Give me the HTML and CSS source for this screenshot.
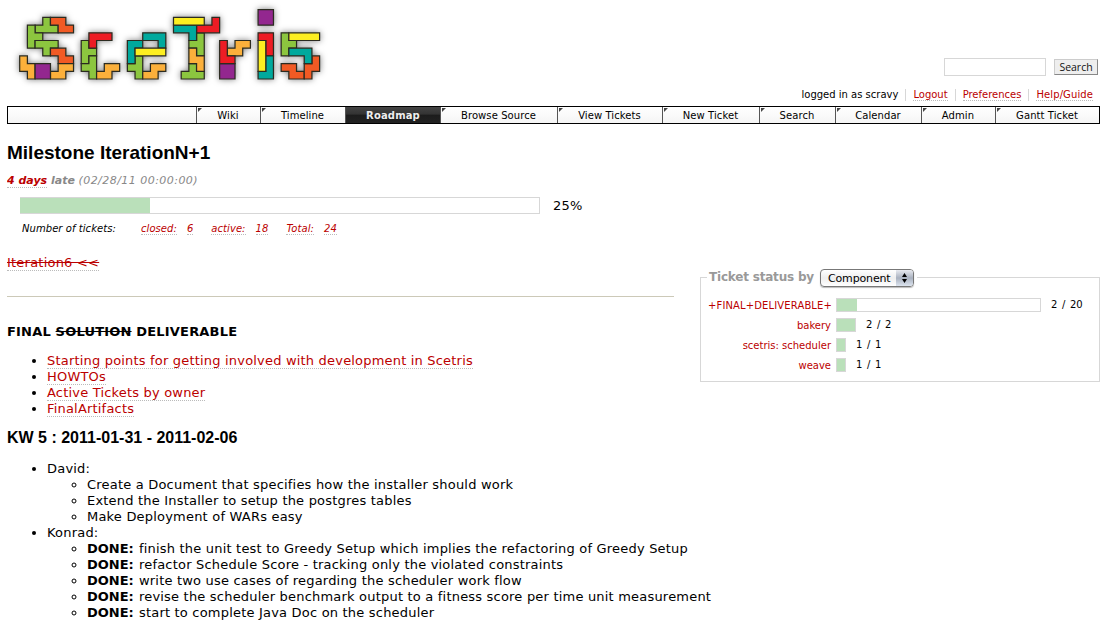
FILE: index.html
```html
<!DOCTYPE html>
<html lang="en">
<head>
<meta charset="utf-8">
<title>Milestone IterationN+1</title>
<link rel="stylesheet" href="styles.css">
</head>
<body>
<header class="header">
  <svg class="logo" width="340" height="100" viewBox="0 0 340 100" role="img" aria-label="ScetTris">
    <g class="blocks" transform="translate(19.7 17.4) scale(7.69 7.7)">
      <g class="green">
        <path d="M3 0h1v1h1v1h-3v-1h1z"/><path d="M1 1h1v1h1v1h-1v1h-1z"/><path d="M2 3h3v1h-1v1h-1v-1h-1z"/>
        <path d="M8 3h1v1h1v1h-1v1h-1z"/><path d="M9 5h1v3h-1v-1h-1v-1h1z"/>
        <path d="M15 5h1v3h-1v-1h-1v-1h1z"/>
        <path d="M23 2h1v3h-1v-1h-1v-1h1z"/><path d="M22 6h1v1h1v1h-3v-1h1z"/>
        <path d="M34 2h1v1h1v1h-1v1h-1z"/>
      </g>
      <g class="rust">
        <path d="M4 0h2v1h1v1h-2v-1h-1z"/><path d="M4 4h2v1h1v1h-2v-1h-1z"/>
        <path d="M34 6h2v1h1v1h-2v-1h-1z"/><path d="M38 5h1v2h-1v1h-1v-2h1z"/>
      </g>
      <g class="amber">
        <path d="M0 5h1v1h1v2h-1v-1h-1z"/><path d="M5 6h2v1h-1v1h-2v-1h1z"/>
        <path d="M11 6h2v1h-1v1h-2v-1h1z"/><path d="M17 6h2v1h-1v1h-2v-1h1z"/>
        <path d="M22 4h1v1h1v2h-1v-1h-1z"/><path d="M28 3h2v1h-1v1h-2v-1h1z"/>
      </g>
      <g class="purple"><path d="M2 6h2v2h-2z"/><path d="M26 6h2v2h-2z"/><path d="M31 -1h2v2h-2z"/></g>
      <g class="red">
        <path d="M9 2h3v1h-2v1h-1z"/><path d="M25 0h1v2h-3v-1h2z"/>
        <path d="M26 3h1v2h1v1h-2z"/><path d="M31 2h2v3h-1v-2h-1z"/>
      </g>
      <g class="teal">
        <path d="M16 2h3v2h-1v-1h-2z"/><path d="M14 3h2v1h-1v2h-1z"/><path d="M20 1h3v2h-1v-1h-2z"/>
        <path d="M32 5h1v3h-2v-1h1z"/><path d="M35 4h3v2h-1v-1h-2z"/>
      </g>
      <g class="yellow"><path d="M15 4h4v1h-4z"/><path d="M20 0h4v1h-4z"/><path d="M31 3h1v4h-1z"/><path d="M35 2h4v1h-4z"/></g>
    </g>
  </svg>
  <div class="tools">
    <form class="search"><input class="field" type="text" aria-label="Search"><button class="button" type="button"><span>Search</span></button></form>
    <ul class="meta">
      <li>logged in as scravy</li><li><a>Logout</a></li><li><a>Preferences</a></li><li><a>Help/Guide</a></li>
    </ul>
  </div>
</header>
<nav class="nav">
  <a class="wiki">Wiki</a><a class="timeline">Timeline</a><a class="roadmap">Roadmap</a><a class="browse">Browse Source</a><a class="view">View Tickets</a><a class="new">New Ticket</a><a class="find">Search</a><a class="calendar">Calendar</a><a class="admin">Admin</a><a class="gantt">Gantt Ticket</a>
</nav>
<main>
  <h1>Milestone IterationN+1</h1>
  <p class="date"><b><a>4 days</a> late</b> <span class="due">(02/28/11 00:00:00)</span></p>
  <div class="overall"><div class="progress"><div class="done" style="width:25%"></div></div><span class="percent">25%</span></div>
  <dl class="counts"><dt class="label">Number of tickets:</dt><dt><a>closed:</a></dt><dd><a>6</a></dd><dt><a>active:</a></dt><dd><a>18</a></dd><dt><a>Total:</a></dt><dd><a>24</a></dd></dl>
  <section class="status">
    <div class="legend"><span class="by">Ticket status by</span><span class="select"><span class="value">Component</span><span class="arrows"><svg width="7" height="12" viewBox="0 0 7 12"><path d="M3.5 1L6 5H1zM3.5 11L6 7H1z"/></svg></span></span></div>
    <div class="row"><a class="name final">+FINAL+DELIVERABLE+</a><div class="bar" style="width:205px"><div class="done" style="width:10%"></div></div><span class="ratio">2 / 20</span></div>
    <div class="row"><a class="name">bakery</a><div class="bar" style="width:20px"><div class="done"></div></div><span class="ratio">2 / 2</span></div>
    <div class="row"><a class="name">scetris: scheduler</a><div class="bar" style="width:10px"><div class="done"></div></div><span class="ratio">1 / 1</span></div>
    <div class="row"><a class="name">weave</a><div class="bar" style="width:10px"><div class="done"></div></div><span class="ratio">1 / 1</span></div>
  </section>
  <p class="previous"><a><s>Iteration6 &lt;&lt;</s></a></p>
  <hr>
  <h2 class="final-title">FINAL <s>SOLUTION</s> DELIVERABLE</h2>
  <ul class="links">
    <li><a>Starting points for getting involved with development in Scetris</a></li>
    <li><a>HOWTOs</a></li>
    <li><a>Active Tickets by owner</a></li>
    <li><a>FinalArtifacts</a></li>
  </ul>
  <h2 class="week">KW 5 : 2011-01-31 - 2011-02-06</h2>
  <ul class="tasks">
    <li>David:
      <ul>
        <li>Create a Document that specifies how the installer should work</li>
        <li>Extend the Installer to setup the postgres tables</li>
        <li>Make Deployment of WARs easy</li>
      </ul>
    </li>
    <li>Konrad:
      <ul>
        <li><b>DONE:</b> finish the unit test to Greedy Setup which implies the refactoring of Greedy Setup</li>
        <li><b>DONE:</b> refactor Schedule Score - tracking only the violated constraints</li>
        <li><b>DONE:</b> write two use cases of regarding the scheduler work flow</li>
        <li><b>DONE:</b> revise the scheduler benchmark output to a fitness score per time unit measurement</li>
        <li><b>DONE:</b> start to complete Java Doc on the scheduler</li>
      </ul>
    </li>
  </ul>
</main>
</body>
</html>
```
FILE: styles.css
```css
* { box-sizing: border-box; }
html { overflow: hidden; }
body { margin: 0 2px 0 7px; background: #fff; color: #000; font: 13px/16px Verdana, "DejaVu Sans", sans-serif; height: 623px; overflow: hidden; }
h1, h2, p, ul, dl, dd { margin: 0; padding: 0; }
a { color: #b00; border-bottom: 1px dotted #bbb; }

.header { display: flex; justify-content: space-between; height: 106px; }
.logo { margin-left: -7px; display: block; filter: drop-shadow(0 0 3px rgba(0,0,0,.5)); }
.blocks { stroke: #2b2b20; stroke-width: .16; }
.green { fill: #8cc63f; } .rust { fill: #f15a24; } .amber { fill: #fbb03b; } .purple { fill: #93278f; }
.red { fill: #ed1c24; } .teal { fill: #00a99d; } .yellow { fill: #fcee21; }

.tools { display: flex; flex-direction: column; align-items: flex-end; padding-top: 58px; }
.search { display: flex; gap: 8px; margin: 0 2px 0 0; height: 18px; }
.field { width: 102px; height: 18px; border: 1px solid #d7d7d7; padding: 0; }
.button { width: 44px; height: 16px; margin-top: 1px; padding: 0; border: 1px solid #ccc; border-right-color: #888; border-bottom-color: #888; background: #eee; color: #111; font: 10.5px/12px "Open Sans", sans-serif; }
.button span { display: block; margin-top: -1px; }
.meta { display: flex; list-style: none; font-size: 10px; line-height: 12px; margin-top: 13px; }
.meta li { padding: 0 7px; border-left: 1px solid #d7d7d7; height: 12px; white-space: nowrap; }
.meta li:last-child { letter-spacing: .1px; }
.meta li:first-child { border-left: 0; }

.nav { display: flex; height: 18px; border: 1px solid #000; padding-left: 188px; background: linear-gradient(#fff, #f5f5f5); font-size: 10px; line-height: 17px; letter-spacing: .08px; }
.nav a { position: relative; color: #000; text-align: center; border: 0; border-left: 1px solid #555; padding-right: 1px; white-space: nowrap; }
.nav a::before { content: ""; position: absolute; left: 1px; top: 1px; border-top: 4px solid #444; border-right: 4px solid transparent; }
.wiki { width: 64px; } .timeline { width: 85px; } .roadmap { width: 95px; } .browse { width: 117px; } .view { width: 105px; }
.new { width: 97px; } .find { width: 76px; } .calendar { width: 86px; } .admin { width: 74px; } .gantt { width: 104px; }
.nav .roadmap { color: #eee; font-weight: bold; letter-spacing: .15px; padding-right: 0; background: linear-gradient(#444 0, #333 45%, #1c1c1c 50%, #222); }
.nav .roadmap::before { display: none; }

h1 { font: bold 19px/22px "Liberation Sans", Arial, sans-serif; margin-top: 18px; }
.date { font-size: 11px; line-height: 14px; margin-top: 10px; font-style: italic; color: #888; }
.due { letter-spacing: .46px; }
.overall { display: flex; align-items: center; margin: 9px 0 0 13px; height: 17px; }
.progress { width: 520px; height: 17px; border: 1px solid #d7d7d7; border-left-width: 0; }
.done { height: 100%; background: #bae0ba; }
.percent { margin-left: 13px; letter-spacing: .2px; }
.counts { display: flex; margin: 8px 0 0 15px; font-size: 10px; line-height: 13px; font-style: italic; height: 13px; white-space: nowrap; letter-spacing: .06px; }
.counts dt { margin-right: 10px; }
.counts dd { margin-right: 18px; }
.counts .label { margin-right: 24px; width: 95px; }

.status { float: right; width: 400px; height: 105px; border: 1px solid #d7d7d7; margin: 42px 0 0 26px; padding: 0 0 0 7px; font-size: 10px; }
.legend { display: flex; align-items: center; height: 19px; width: 210px; margin: -10px 0 11px -1px; padding-left: 2px; background: #fff; color: #999; font-weight: bold; font-size: 12px; white-space: nowrap; }
.by { width: 111px; letter-spacing: -.2px; margin-top: -1px; }
.select { display: flex; width: 94px; height: 18px; border: 1px solid #777; border-radius: 4px; background: linear-gradient(#fff, #eee 50%, #fff); color: #000; font: 11px/17px "DejaVu Sans", sans-serif; box-shadow: 0 1px 1px #bbb; overflow: hidden; }
.value { width: 75px; padding-left: 7px; letter-spacing: -.15px; }
.arrows { width: 17px; background: linear-gradient(#e8eaf0, #a9b1bf 50%, #dce4ef); display: grid; place-items: center; }
.row { display: flex; height: 20px; align-items: flex-start; line-height: 14px; }
.name { width: 123px; text-align: right; border: 0; white-space: nowrap; padding-top: 1px; }
.final { letter-spacing: .13px; }
.bar { height: 14px; border: 1px solid #d7d7d7; margin-left: 5px; flex: none; }
.ratio { margin-left: 10px; word-spacing: 1.4px; }

.previous { padding-top: 20px; letter-spacing: .22px; }
hr { width: 667px; border: 0; border-top: 1px solid #ccc9b8; margin: 25px 0 0; height: 1px; }
h2 { font-size: 13px; line-height: 18px; }
.final-title { margin-top: 26px; letter-spacing: .19px; }
.links { margin: 12px 0 0; padding-left: 40px; letter-spacing: .19px; }
.week { font: bold 16px/18px "Liberation Sans", Arial, sans-serif; margin-top: 12px; }
.tasks { padding-left: 40px; margin-top: 14px; letter-spacing: .2px; }
.tasks b { letter-spacing: 0; margin-right: .8px; }
.tasks ul { padding-left: 40px; }
li { white-space: nowrap; }
```
